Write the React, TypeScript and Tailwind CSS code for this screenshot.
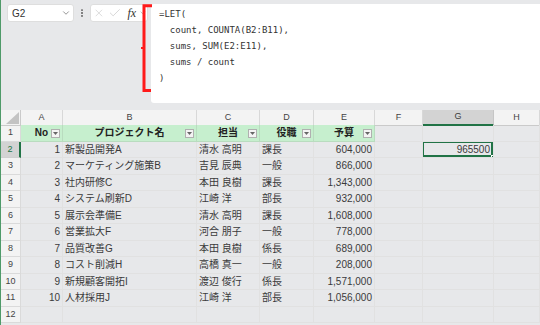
import React from 'react';
import { ChevronDown, EllipsisVertical, X, Check } from 'lucide-react';

const COLS = 'grid grid-cols-[20px_42px_134px_63px_54px_61px_48px_71px_46px]';
const FONT = { fontFamily: '"Liberation Sans", "Noto Sans CJK JP", sans-serif' };

const rows = [
  ['1', '新製品開発A', '清水 高明', '課長', '604,000'],
  ['2', 'マーケティング施策B', '吉見 辰典', '一般', '866,000'],
  ['3', '社内研修C', '本田 良樹', '課長', '1,343,000'],
  ['4', 'システム刷新D', '江崎 洋', '部長', '932,000'],
  ['5', '展示会準備E', '清水 高明', '課長', '1,608,000'],
  ['6', '営業拡大F', '河合 朋子', '一般', '778,000'],
  ['7', '品質改善G', '本田 良樹', '係長', '689,000'],
  ['8', 'コスト削減H', '高橋 真一', '一般', '208,000'],
  ['9', '新規顧客開拓I', '渡辺 俊行', '係長', '1,571,000'],
  ['10', '人材採用J', '江崎 洋', '部長', '1,056,000'],
  ['', '', '', '', ''],
];

const FilterBtn = () => (
  <span className="absolute right-[2px] top-[4px] w-[9px] h-[9px] border border-[#b0b0b0] bg-[#f4f4f4] flex items-center justify-center">
    <svg width="5" height="3" viewBox="0 0 5 3">
      <path d="M0 0 H5 L2.5 3 Z" fill="#666" />
    </svg>
  </span>
);

const ColHeader = ({ label, active }: { label: string; active?: boolean }) => (
  <div
    className={
      active
        ? 'flex items-center justify-center bg-[#d3d3d3] border-r border-[#c6c6c6] border-b-2 border-b-[#217346] text-[9px] text-[#3b3b3b]'
        : 'flex items-center justify-center bg-[#f3f3f3] border-r border-[#d8d8d8] border-b border-b-[#cacaca] text-[9px] text-[#444]'
    }
  >
    {label}
  </div>
);

const RowHeader = ({ n, active }: { n: number; active?: boolean }) => (
  <div
    className={
      active
        ? 'flex items-center justify-center bg-[#d3d3d3] border-r-2 border-r-[#217346] border-b border-[#cfcfcf] text-[9px] text-[#217346]'
        : 'flex items-center justify-center bg-[#f3f3f3] border-r border-[#cacaca] border-b border-[#dadada] text-[9px] text-[#444]'
    }
  >
    {n}
  </div>
);

const cell = 'border-r border-b border-[#e1e1e1] flex items-center text-[10px] text-[#3a3a3a] whitespace-nowrap overflow-hidden';

export default function App() {
  return (
    <div className="relative w-[540px] h-[325px] overflow-hidden bg-[#e7e8ea] border-l border-[#4f9a69]" style={FONT}>
      {/* formula bar */}
      <div className="h-[110px] flex items-start pt-[4px] pl-[6px]">
        <div className="w-[67px] h-[18px] bg-white rounded-[3px] border border-[#dedede] flex items-center justify-between pl-[4px] pr-[2px] text-[10px] text-[#333]">
          <span>G2</span>
          <ChevronDown size={10} strokeWidth={1.5} className="text-[#555]" />
        </div>
        <div className="w-[16px] h-[18px] flex items-center justify-center text-[#555]">
          <EllipsisVertical size={10} strokeWidth={2.5} />
        </div>
        <div className="w-[58px] h-[18px] bg-white rounded-[3px] border border-[#dedede] flex items-center pl-[2px] gap-[3px]">
          <X size={12} strokeWidth={1.1} className="text-[#c0c0c0]" />
          <Check size={14} strokeWidth={1.1} className="text-[#c0c0c0]" />
          <span className="italic text-[12px] text-[#333] ml-[3px]" style={{ fontFamily: '"Liberation Serif", serif' }}>fx</span>
          <ChevronDown size={8} strokeWidth={1.5} className="text-[#777]" />
        </div>
        <div
          className="ml-[3px] flex-1 h-[99px] bg-white rounded-l-[3px] pl-[8px] pt-[2px] text-[9px] leading-[16px] text-[#333] whitespace-pre"
          style={{ fontFamily: '"DejaVu Sans Mono", monospace' }}
        >
          {'=LET(\n  count, COUNTA(B2:B11),\n  sums, SUM(E2:E11),\n  sums / count\n)'}
        </div>
      </div>

      {/* red annotation bracket */}
      <svg className="absolute left-[139px] top-[3px]" width="16" height="92" viewBox="0 0 16 92">
        <path d="M12 2.7 H4 V87.5 H11" fill="none" stroke="#ff1a1a" strokeWidth="3" strokeLinejoin="miter" />
        <path d="M4 45 H1" fill="none" stroke="#ff1a1a" strokeWidth="2" />
      </svg>

      {/* grid */}
      <div className={`${COLS} h-[15px]`}>
        <div className="bg-[#f3f3f3] border-r border-b border-[#cacaca] relative">
          <svg className="absolute right-[1px] bottom-[1px]" width="13" height="12" viewBox="0 0 13 12">
            <path d="M13 0 V12 H0 Z" fill="#c3c3c3" />
          </svg>
        </div>
        {['A', 'B', 'C', 'D', 'E', 'F', 'G', 'H'].map((c) => (
          <ColHeader key={c} label={c} active={c === 'G'} />
        ))}
      </div>

      <div className={`${COLS} h-[16.5px]`}>
        <RowHeader n={1} />
        {['No', 'プロジェクト名', '担当', '役職', '予算'].map((h) => (
          <div key={h} className="relative bg-[#c6efce] border-r border-b border-[#b9dcbf] flex items-center justify-center text-[10px] font-bold text-[#222]">
            {h}
            <FilterBtn />
          </div>
        ))}
        <div className={cell} />
        <div className={cell} />
        <div className={cell} />
      </div>

      {rows.map((r, i) => (
        <div key={i} className={`${COLS} h-[16.5px]`}>
          <RowHeader n={i + 2} active={i === 0} />
          <div className={`${cell} justify-end pr-[2px]`}>{r[0]}</div>
          <div className={`${cell} pl-[2px]`}>{r[1]}</div>
          <div className={`${cell} pl-[2px]`}>{r[2]}</div>
          <div className={`${cell} pl-[2px]`}>{r[3]}</div>
          <div className={`${cell} justify-end pr-[2px]`}>{r[4]}</div>
          <div className={cell} />
          <div className={`${cell} relative justify-end pr-[3px]`}>
            {i === 0 && (
              <>
                <span>965500</span>
                <span className="absolute -left-[1px] -top-[1px] right-0 bottom-0 border-2 border-[#217346]" />
                <span className="absolute -right-[2px] -bottom-[2px] w-[4px] h-[4px] bg-[#217346] border border-white" />
              </>
            )}
          </div>
          <div className={cell} />
        </div>
      ))}
    </div>
  );
}
